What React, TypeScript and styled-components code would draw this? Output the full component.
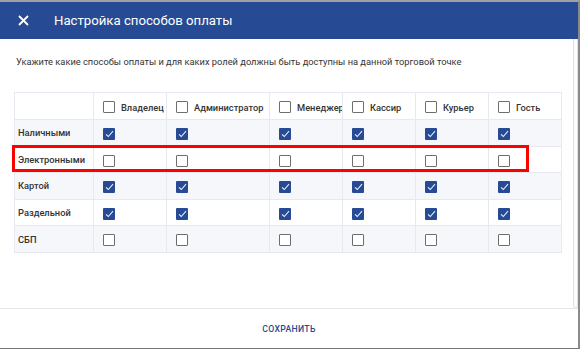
import styled, { createGlobalStyle } from "styled-components";

const GlobalStyle = createGlobalStyle`
    html, body {
        margin: 0;
        padding: 0;
        background: #ffffff;
    }
    body {
        font-family: Roboto, "Noto Sans", sans-serif;
    }
`;

const Dialog = styled.div`
    width: 580px;
    height: 349px;
    box-sizing: border-box;
    border-top: 2px solid #a0a0a0;
    border-right: 2px solid #8a8a8a;
    border-bottom: 1px solid #777777;
    display: flex;
    flex-direction: column;
    background: #ffffff;
    overflow: hidden;
`;

const Header = styled.div`
    height: 37px;
    flex-shrink: 0;
    background: #264b94;
    display: flex;
    align-items: center;
    padding-left: 18px;
    gap: 25px;
    color: #ffffff;
`;

const Title = styled.h1`
    margin: 0;
    font-size: 13.2px;
    font-weight: 400;
`;

const Body = styled.div`
    flex: 1;
    display: flex;
    min-height: 0;
`;

const Content = styled.div`
    flex: 1;
    padding: 17px 0 0 14px;
`;

const Scrollbar = styled.div`
    width: 5px;
    box-sizing: border-box;
    border: 1px solid #e2e2e2;
    border-top: none;
    border-radius: 0 0 3px 3px;
    background: #fdfdfd;
`;

const Description = styled.p`
    margin: 0 0 0 2px;
    font-size: 9.3px;
    color: #333333;
    line-height: 12px;
`;

const TableWrap = styled.div`
    position: relative;
    margin-top: 24px;
    width: 547px;
`;

const Table = styled.table`
    border-collapse: collapse;
    table-layout: fixed;
    width: 547px;
`;

const HeadCell = styled.th<{ $width: number }>`
    width: ${(p) => p.$width}px;
    height: 27px;
    box-sizing: border-box;
    border: 1px solid #e7e9f0;
    padding: 0 0 0 9px;
    text-align: left;
    font-weight: 500;
    font-size: 9.3px;
    color: #333333;
    white-space: nowrap;
    overflow: hidden;
`;

const HeadInner = styled.div`
    display: flex;
    align-items: center;
    gap: 6px;
    padding-top: 2px;
`;

const Row = styled.tr<{ $shade: boolean }>`
    background: ${(p) => (p.$shade ? "#f6f7fb" : "#ffffff")};
`;

const LabelCell = styled.td`
    height: 26.6px;
    box-sizing: border-box;
    border: 1px solid #e7e9f0;
    padding: 0 0 0 3px;
    font-size: 9.3px;
    font-weight: 500;
    color: #333333;
    white-space: nowrap;
`;

const CheckCell = styled.td`
    height: 26.6px;
    box-sizing: border-box;
    border: 1px solid #e7e9f0;
    padding: 0 0 0 9px;
    vertical-align: middle;
`;

const Box = styled.span<{ $checked: boolean }>`
    display: inline-flex;
    align-items: center;
    justify-content: center;
    width: 12px;
    height: 12px;
    box-sizing: border-box;
    border-radius: 1px;
    border: ${(p) => (p.$checked ? "none" : "1.5px solid #6e6e6e")};
    background: ${(p) => (p.$checked ? "#264b94" : "#ffffff")};
    vertical-align: middle;
    flex-shrink: 0;
`;

const Highlight = styled.div`
    position: absolute;
    left: -2px;
    top: 53px;
    width: 517px;
    height: 27px;
    box-sizing: border-box;
    border: 3px solid #ff0000;
    pointer-events: none;
`;

const Footer = styled.div`
    height: 39px;
    flex-shrink: 0;
    border-top: 1px solid #e6e6e6;
    display: flex;
    align-items: center;
    justify-content: center;
`;

const SaveButton = styled.button`
    border: none;
    background: transparent;
    font-family: Roboto, sans-serif;
    font-size: 8.7px;
    font-weight: 500;
    letter-spacing: 0.3px;
    color: #2b4a8e;
    text-transform: uppercase;
    padding: 0;
    margin-top: 1px;
`;

function CloseIcon() {
    return (
        <svg width="11" height="11" viewBox="0 0 11 11">
            <path d="M1 1 L10 10 M10 1 L1 10" stroke="#ffffff" strokeWidth="1.8" />
        </svg>
    );
}

function Checkbox({ checked }: { checked: boolean }) {
    return (
        <Box $checked={checked}>
            {checked && (
                <svg width="9" height="8" viewBox="0 0 9 8">
                    <path d="M1 4.3 L3.3 6.5 L8 1.2" stroke="#e8ecf6" strokeWidth="1.1" fill="none" />
                </svg>
            )}
        </Box>
    );
}

const roles = [
    { name: "Владелец", width: 73 },
    { name: "Администратор", width: 103 },
    { name: "Менеджер", width: 73 },
    { name: "Кассир", width: 73 },
    { name: "Курьер", width: 73 },
    { name: "Гость", width: 73 },
];

const methods = [
    { name: "Наличными", enabled: true },
    { name: "Электронными", enabled: false },
    { name: "Картой", enabled: true },
    { name: "Раздельной", enabled: true },
    { name: "СБП", enabled: false },
];

export default function App() {
    return (
        <>
            <GlobalStyle />
            <Dialog>
                <Header>
                    <CloseIcon />
                    <Title>Настройка способов оплаты</Title>
                </Header>
                <Body>
                    <Content>
                        <Description>
                            Укажите какие способы оплаты и для каких ролей должны быть доступны на данной торговой точке
                        </Description>
                        <TableWrap>
                            <Table>
                                <thead>
                                    <tr>
                                        <HeadCell $width={79} />
                                        {roles.map((r) => (
                                            <HeadCell key={r.name} $width={r.width}>
                                                <HeadInner>
                                                    <Checkbox checked={false} />
                                                    {r.name}
                                                </HeadInner>
                                            </HeadCell>
                                        ))}
                                    </tr>
                                </thead>
                                <tbody>
                                    {methods.map((m, i) => (
                                        <Row key={m.name} $shade={i % 2 === 0}>
                                            <LabelCell>{m.name}</LabelCell>
                                            {roles.map((r) => (
                                                <CheckCell key={r.name}>
                                                    <Checkbox checked={m.enabled} />
                                                </CheckCell>
                                            ))}
                                        </Row>
                                    ))}
                                </tbody>
                            </Table>
                            <Highlight />
                        </TableWrap>
                    </Content>
                    <Scrollbar />
                </Body>
                <Footer>
                    <SaveButton>Сохранить</SaveButton>
                </Footer>
            </Dialog>
        </>
    );
}
